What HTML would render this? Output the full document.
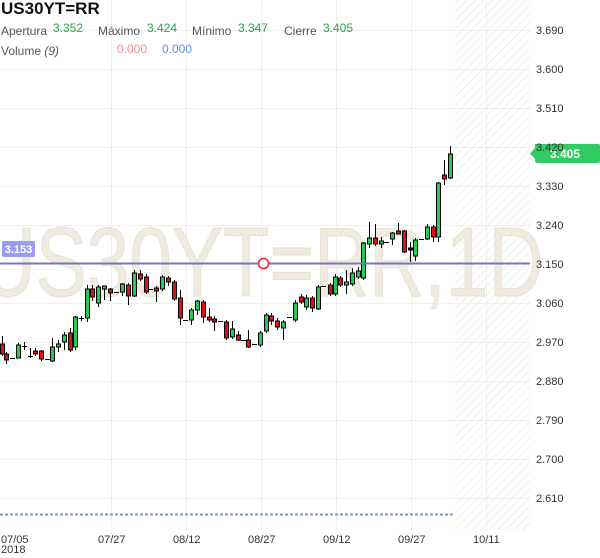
<!DOCTYPE html>
<html><head><meta charset="utf-8"><style>
body{margin:0;width:600px;height:558px;overflow:hidden;background:#fff;font-family:"Liberation Sans",sans-serif;position:relative}
.t{position:absolute;white-space:nowrap}
</style></head><body>
<svg width="600" height="558" style="position:absolute;left:0;top:0">
<defs><pattern id="h" width="6" height="6" patternUnits="userSpaceOnUse" patternTransform="rotate(45)"><line x1="0" y1="0" x2="0" y2="6" stroke="#e6e6e6" stroke-width="1.2"/></pattern></defs>
<rect x="455" y="0" width="75" height="530" fill="url(#h)"/>
<g stroke="#eeeeee" stroke-width="1">
<line x1="0" x2="530" y1="30.5" y2="30.5"/><line x1="0" x2="530" y1="69.5" y2="69.5"/><line x1="0" x2="530" y1="108.5" y2="108.5"/><line x1="0" x2="530" y1="147.5" y2="147.5"/><line x1="0" x2="530" y1="186.5" y2="186.5"/><line x1="0" x2="530" y1="225.5" y2="225.5"/><line x1="0" x2="530" y1="303.5" y2="303.5"/><line x1="0" x2="530" y1="342.5" y2="342.5"/><line x1="0" x2="530" y1="381.5" y2="381.5"/><line x1="0" x2="530" y1="420.5" y2="420.5"/><line x1="0" x2="530" y1="459.5" y2="459.5"/><line x1="0" x2="530" y1="498.5" y2="498.5"/>
<line x1="111.5" x2="111.5" y1="0" y2="530"/><line x1="186.5" x2="186.5" y1="0" y2="530"/><line x1="261.5" x2="261.5" y1="0" y2="530"/><line x1="336.5" x2="336.5" y1="0" y2="530"/><line x1="411.5" x2="411.5" y1="0" y2="530"/><line x1="486.5" x2="486.5" y1="0" y2="530"/>
</g>
<text x="262" y="296" font-family="Liberation Sans" font-size="98" fill="#efebe0" stroke="#e6e1d3" stroke-width="1" text-anchor="middle" transform="translate(262 0) scale(0.78 1) translate(-262 0)">US30YT=RR,1D</text>
<line x1="0" x2="455" y1="514.5" y2="514.5" stroke="#7f93d6" stroke-width="2" stroke-dasharray="3,2"/>
<g stroke="#000" stroke-width="1">
<line x1="2.5" x2="2.5" y1="336" y2="356"/><rect x="0.5" y="344" width="4" height="10" fill="#e31010"/>
<line x1="6.5" x2="6.5" y1="352" y2="364"/><rect x="4.5" y="354" width="4" height="6" fill="#e31010"/>
<line x1="10" x2="15" y1="358.5" y2="358.5"/>
<line x1="18.5" x2="18.5" y1="343" y2="358"/><rect x="16.5" y="345" width="4" height="13" fill="#22cc55"/>
<line x1="24.5" x2="24.5" y1="342" y2="350"/><line x1="22" x2="27" y1="346.5" y2="346.5"/>
<line x1="30.5" x2="30.5" y1="348" y2="358"/><line x1="28" x2="33" y1="356.5" y2="356.5"/>
<line x1="35.5" x2="35.5" y1="348" y2="356"/><rect x="33.5" y="351" width="4" height="3" fill="#e31010"/>
<line x1="41.5" x2="41.5" y1="350" y2="361"/><rect x="39.5" y="351" width="4" height="8" fill="#e31010"/>
<line x1="45" x2="50" y1="359.5" y2="359.5"/>
<line x1="52.5" x2="52.5" y1="338" y2="362"/><rect x="50.5" y="347" width="4" height="14" fill="#22cc55"/>
<line x1="58.5" x2="58.5" y1="340" y2="352"/><rect x="56.5" y="344" width="4" height="3" fill="#22cc55"/>
<line x1="64.5" x2="64.5" y1="332" y2="350"/><rect x="62.5" y="335" width="4" height="7" fill="#22cc55"/>
<line x1="70.5" x2="70.5" y1="328" y2="352"/><rect x="68.5" y="333" width="4" height="17" fill="#e31010"/>
<line x1="75.5" x2="75.5" y1="316" y2="350"/><rect x="73.5" y="317" width="4" height="30" fill="#22cc55"/>
<line x1="79" x2="84" y1="318.5" y2="318.5"/><line x1="81.5" x2="81.5" y1="316" y2="321"/>
<line x1="87.5" x2="87.5" y1="285" y2="322"/><rect x="85.5" y="289" width="4" height="29" fill="#22cc55"/>
<line x1="92.5" x2="92.5" y1="285" y2="301"/><rect x="90.5" y="289" width="4" height="8" fill="#e31010"/>
<line x1="98.5" x2="98.5" y1="285" y2="307"/><rect x="96.5" y="287" width="4" height="16" fill="#22cc55"/>
<line x1="104.5" x2="104.5" y1="286" y2="300"/><rect x="102.5" y="286" width="4" height="3" fill="#22cc55"/>
<line x1="110.5" x2="110.5" y1="288" y2="301"/><rect x="108.5" y="289" width="4" height="4" fill="#e31010"/>
<line x1="114" x2="119" y1="292.5" y2="292.5"/>
<line x1="122.5" x2="122.5" y1="283" y2="296"/><rect x="120.5" y="284" width="4" height="8" fill="#22cc55"/>
<line x1="128.5" x2="128.5" y1="283" y2="305"/><rect x="126.5" y="285" width="4" height="11" fill="#e31010"/>
<line x1="134.5" x2="134.5" y1="270" y2="297"/><rect x="132.5" y="273" width="4" height="23" fill="#22cc55"/>
<line x1="140.5" x2="140.5" y1="270" y2="281"/><rect x="138.5" y="274" width="4" height="5" fill="#e31010"/>
<line x1="146.5" x2="146.5" y1="274" y2="294"/><rect x="144.5" y="277" width="4" height="15" fill="#e31010"/>
<line x1="148" x2="153" y1="289.5" y2="289.5"/>
<line x1="156.5" x2="156.5" y1="286" y2="302"/><rect x="154.5" y="288" width="4" height="3" fill="#e31010"/>
<line x1="162.5" x2="162.5" y1="275" y2="291"/><rect x="160.5" y="277" width="4" height="12" fill="#22cc55"/>
<line x1="168.5" x2="168.5" y1="276" y2="286"/><rect x="166.5" y="278" width="4" height="4" fill="#e31010"/>
<line x1="174.5" x2="174.5" y1="280" y2="301"/><rect x="172.5" y="282" width="4" height="17" fill="#e31010"/>
<line x1="180.5" x2="180.5" y1="290" y2="325"/><rect x="178.5" y="298" width="4" height="20" fill="#e31010"/>
<line x1="183" x2="188" y1="320.5" y2="320.5"/>
<line x1="191.5" x2="191.5" y1="308" y2="325"/><rect x="189.5" y="310" width="4" height="10" fill="#22cc55"/>
<line x1="197.5" x2="197.5" y1="300" y2="315"/><rect x="195.5" y="301" width="4" height="9" fill="#22cc55"/>
<line x1="203.5" x2="203.5" y1="300" y2="323"/><rect x="201.5" y="302" width="4" height="15" fill="#e31010"/>
<line x1="209.5" x2="209.5" y1="308" y2="322"/><rect x="207.5" y="317" width="4" height="3" fill="#e31010"/>
<line x1="214.5" x2="214.5" y1="316" y2="331"/><rect x="212.5" y="319" width="4" height="3" fill="#e31010"/>
<line x1="218" x2="223" y1="321.5" y2="321.5"/>
<line x1="226.5" x2="226.5" y1="320" y2="340"/><rect x="224.5" y="322" width="4" height="16" fill="#e31010"/>
<line x1="232.5" x2="232.5" y1="321" y2="339"/><rect x="230.5" y="329" width="4" height="8" fill="#22cc55"/>
<line x1="238.5" x2="238.5" y1="331" y2="341"/><rect x="236.5" y="335" width="4" height="5" fill="#e31010"/>
<line x1="241" x2="246" y1="340.5" y2="340.5"/>
<line x1="248.5" x2="248.5" y1="330" y2="348"/><rect x="246.5" y="340" width="4" height="7" fill="#e31010"/>
<line x1="252" x2="257" y1="344.5" y2="344.5"/>
<line x1="260.5" x2="260.5" y1="331" y2="347"/><rect x="258.5" y="333" width="4" height="12" fill="#22cc55"/>
<line x1="266.5" x2="266.5" y1="313" y2="333"/><rect x="264.5" y="315" width="4" height="16" fill="#22cc55"/>
<line x1="271.5" x2="271.5" y1="313" y2="325"/><rect x="269.5" y="316" width="4" height="5" fill="#e31010"/>
<line x1="277.5" x2="277.5" y1="318" y2="330"/><rect x="275.5" y="321" width="4" height="6" fill="#e31010"/>
<line x1="283.5" x2="283.5" y1="320" y2="340"/><rect x="281.5" y="322" width="4" height="6" fill="#22cc55"/>
<line x1="287" x2="292" y1="317.5" y2="317.5"/>
<line x1="295.5" x2="295.5" y1="300" y2="322"/><rect x="293.5" y="303" width="4" height="17" fill="#22cc55"/>
<line x1="301.5" x2="301.5" y1="294" y2="304"/><rect x="299.5" y="297" width="4" height="5" fill="#e31010"/>
<line x1="306.5" x2="306.5" y1="295" y2="310"/><rect x="304.5" y="298" width="4" height="9" fill="#22cc55"/>
<line x1="312.5" x2="312.5" y1="296" y2="312"/><rect x="310.5" y="298" width="4" height="10" fill="#e31010"/>
<line x1="318.5" x2="318.5" y1="285" y2="310"/><rect x="316.5" y="287" width="4" height="22" fill="#22cc55"/>
<line x1="321" x2="326" y1="286.5" y2="286.5"/>
<line x1="330.5" x2="330.5" y1="283" y2="296"/><rect x="328.5" y="285" width="4" height="9" fill="#e31010"/>
<line x1="335.5" x2="335.5" y1="274" y2="296"/><rect x="333.5" y="277" width="4" height="17" fill="#22cc55"/>
<line x1="340.5" x2="340.5" y1="276" y2="287"/><rect x="338.5" y="278" width="4" height="7" fill="#e31010"/>
<line x1="346.5" x2="346.5" y1="270" y2="294"/><rect x="344.5" y="282" width="4" height="3" fill="#22cc55"/>
<line x1="352.5" x2="352.5" y1="268" y2="286"/><rect x="350.5" y="273" width="4" height="11" fill="#22cc55"/>
<line x1="358.5" x2="358.5" y1="267" y2="279"/><rect x="356.5" y="271" width="4" height="6" fill="#22cc55"/>
<line x1="363.5" x2="363.5" y1="242" y2="280"/><rect x="361.5" y="243" width="4" height="35" fill="#22cc55"/>
<line x1="369.5" x2="369.5" y1="222" y2="248"/><rect x="367.5" y="238" width="4" height="6" fill="#22cc55"/>
<line x1="375.5" x2="375.5" y1="224" y2="246"/><rect x="373.5" y="238" width="4" height="6" fill="#e31010"/>
<line x1="381.5" x2="381.5" y1="237" y2="248"/><rect x="379.5" y="241" width="4" height="3" fill="#22cc55"/>
<line x1="384" x2="389" y1="242.5" y2="242.5"/>
<line x1="392.5" x2="392.5" y1="232" y2="245"/><rect x="390.5" y="233" width="4" height="6" fill="#22cc55"/>
<line x1="398.5" x2="398.5" y1="223" y2="233"/><rect x="396.5" y="231" width="4" height="3" fill="#e31010"/>
<line x1="404.5" x2="404.5" y1="230" y2="253"/><rect x="402.5" y="231" width="4" height="21" fill="#e31010"/>
<line x1="410.5" x2="410.5" y1="242" y2="262"/><rect x="408.5" y="248" width="4" height="2" fill="#000"/>
<line x1="415.5" x2="415.5" y1="238" y2="261"/><rect x="413.5" y="240" width="4" height="16" fill="#22cc55"/>
<line x1="419" x2="424" y1="239.5" y2="239.5"/>
<line x1="427.5" x2="427.5" y1="224" y2="240"/><rect x="425.5" y="227" width="4" height="12" fill="#22cc55"/>
<line x1="433.5" x2="433.5" y1="225" y2="242"/><rect x="431.5" y="227" width="4" height="10" fill="#e31010"/>
<line x1="438.5" x2="438.5" y1="182" y2="242"/><rect x="436.5" y="183" width="4" height="54" fill="#22cc55"/>
<line x1="444.5" x2="444.5" y1="160" y2="185"/><rect x="442.5" y="175" width="4" height="4" fill="#e31010"/>
<line x1="450.5" x2="450.5" y1="146" y2="179"/><rect x="448.5" y="154" width="4" height="24" fill="#22cc55"/>
</g>
<line x1="0" x2="530" y1="263.5" y2="263.5" stroke="#7478bd" stroke-width="2"/>
<circle cx="263.5" cy="263.5" r="5" fill="#fff" stroke="#e8232a" stroke-width="1.5"/>
<rect x="2" y="241" width="33" height="16" rx="2" fill="#9a9ef2"/>
<text x="18.5" y="253" font-size="11" font-weight="bold" fill="#fff" text-anchor="middle" font-family="Liberation Sans">3.153</text>
<path d="M530 153.5 L535 148 L535 144 Q535 144 537 144 L598 144 Q600 144 600 146 L600 161 Q600 163 598 163 L537 163 Q535 163 535 161 L535 159 Z" fill="#2ecc62"/>
<text x="565" y="158" font-size="12" font-weight="bold" fill="#fff" text-anchor="middle" font-family="Liberation Sans">3.405</text>
<g font-size="11" fill="#333" font-family="Liberation Sans">
<text x="536" y="34">3.690</text><text x="536" y="73">3.600</text><text x="536" y="112">3.510</text><text x="536" y="151">3.420</text><text x="536" y="190">3.330</text><text x="536" y="229">3.240</text><text x="536" y="268">3.150</text><text x="536" y="307">3.060</text><text x="536" y="346">2.970</text><text x="536" y="385">2.880</text><text x="536" y="424">2.790</text><text x="536" y="463">2.700</text><text x="536" y="502">2.610</text>
<text x="1" y="543">07/05</text><text x="1" y="553">2018</text><text x="98" y="543">07/27</text><text x="173" y="543">08/12</text><text x="248" y="543">08/27</text><text x="323" y="543">09/12</text><text x="398" y="543">09/27</text><text x="473" y="543">10/11</text>
</g>
</svg>
<div class="t" style="left:1px;top:-1px;font-size:17px;font-weight:bold;color:#111">US30YT=RR</div>
<div class="t" style="left:1px;top:24px;font-size:12px;color:#555">Apertura</div>
<div class="t" style="left:53px;top:21px;font-size:12px;color:#22aa44">3.352</div>
<div class="t" style="left:98px;top:24px;font-size:12px;color:#555">Máximo</div>
<div class="t" style="left:147px;top:21px;font-size:12px;color:#22aa44">3.424</div>
<div class="t" style="left:192px;top:24px;font-size:12px;color:#555">Mínimo</div>
<div class="t" style="left:238px;top:21px;font-size:12px;color:#22aa44">3.347</div>
<div class="t" style="left:284px;top:24px;font-size:12px;color:#555">Cierre</div>
<div class="t" style="left:323px;top:21px;font-size:12px;color:#22aa44">3.405</div>
<div class="t" style="left:1px;top:44px;font-size:12px;color:#555">Volume <i>(9)</i></div>
<div class="t" style="left:117px;top:42px;font-size:12px;color:#ef8f8f">0.000</div>
<div class="t" style="left:162px;top:42px;font-size:12px;color:#5b8def">0.000</div>
</body></html>
